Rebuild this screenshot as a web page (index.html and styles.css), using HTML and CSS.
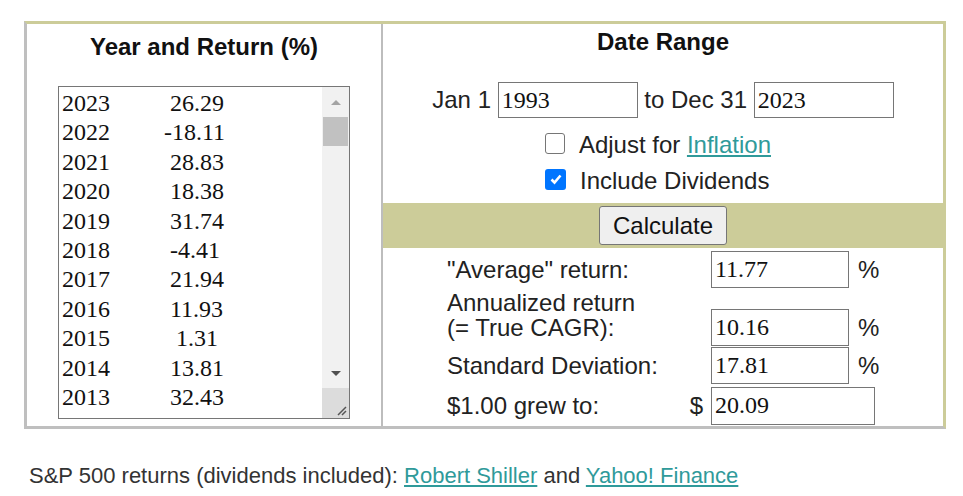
FILE: index.html
```html
<!DOCTYPE html>
<html>
<head>
    <meta charset="UTF-8">
    <link rel="stylesheet" href="styles.css">
</head>
<body>
    <div class="calc">
        <div class="col-left">
            <h2 class="heading heading-left">Year and Return (%)</h2>
            <div class="listbox">
                <div class="list-lines">
                    <div class="line">2023          26.29</div>
                    <div class="line">2022         -18.11</div>
                    <div class="line">2021          28.83</div>
                    <div class="line">2020          18.38</div>
                    <div class="line">2019          31.74</div>
                    <div class="line">2018          -4.41</div>
                    <div class="line">2017          21.94</div>
                    <div class="line">2016          11.93</div>
                    <div class="line">2015           1.31</div>
                    <div class="line">2014          13.81</div>
                    <div class="line">2013          32.43</div>
                </div>
                <div class="scrollbar">
                    <div class="sb-btn"><span class="arrow-up"></span></div>
                    <div class="sb-track"><div class="sb-thumb"></div></div>
                    <div class="sb-btn"><span class="arrow-down"></span></div>
                    <div class="sb-corner">
                        <svg width="12" height="12" viewBox="0 0 12 12"><path d="M11 3 L3 11 M11 7 L7 11" stroke="#555" stroke-width="1.5"/></svg>
                    </div>
                </div>
            </div>
        </div>
        <div class="col-right">
            <div class="range">
                <h2 class="heading">Date Range</h2>
                <div class="years">Jan 1 <input type="text" class="field" value="1993"> to Dec 31 <input type="text" class="field" value="2023"></div>
                <div class="checks">
                    <div class="check"><span class="box"></span>Adjust for <a href="#">Inflation</a></div>
                    <div class="check"><span class="box checked"><svg width="14" height="14" viewBox="0 0 14 14"><path d="M2.5 7.5 L5.5 10.5 L11.5 3.5" fill="none" stroke="#fff" stroke-width="2.6"/></svg></span>Include Dividends</div>
                </div>
            </div>
            <div class="band"><button class="calc-btn">Calculate</button></div>
            <div class="results">
                <div class="label">"Average" return:</div>
                <div class="dollar"></div>
                <input type="text" class="field out" value="11.77">
                <div class="pct">%</div>

                <div class="label label-two">Annualized return<br>(= True CAGR):</div>
                <div class="dollar"></div>
                <input type="text" class="field out out-end" value="10.16">
                <div class="pct pct-end">%</div>

                <div class="label">Standard Deviation:</div>
                <div class="dollar"></div>
                <input type="text" class="field out" value="17.81">
                <div class="pct">%</div>

                <div class="label">$1.00 grew to:</div>
                <div class="dollar">$</div>
                <input type="text" class="field out out-wide" value="20.09">
            </div>
        </div>
    </div>
    <p class="sources">S&amp;P 500 returns (dividends included): <a href="#">Robert Shiller</a> and <a href="#">Yahoo! Finance</a></p>
</body>
</html>
```

FILE: styles.css
```css
body {
    margin: 0;
    padding: 21px 0 0 24px;
    background-color: #fff;
    color: #222;
    font-family: "Liberation Sans", Arial, sans-serif;
    font-size: 24px;
}
a {
    color: #2f9a9a;
}
.calc {
    display: flex;
    width: 916px;
    height: 402px;
    border-style: solid;
    border-width: 3px;
    border-color: #cccc99 #cccc99 #bfbfbf #bfbfbf;
}
.col-left {
    width: 354px;
    border-right: 2px solid #bdbdbd;
    display: flex;
    flex-direction: column;
    align-items: center;
}
.col-right {
    flex: 1;
    display: flex;
    flex-direction: column;
}
.heading {
    margin: 4px 0 0;
    font-size: 24px;
    line-height: 28px;
    font-weight: bold;
    color: #111;
    text-align: center;
}
.heading-left {
    margin-top: 9px;
}

/* year list, drawn like a textarea */
.listbox {
    margin-top: 25px;
    width: 290px;
    height: 331px;
    border: 1px solid #767676;
    display: flex;
}
.list-lines {
    flex: 1;
    overflow: hidden;
    padding: 2px 0 0 3px;
    font-family: "Liberation Serif", "Times New Roman", serif;
    font-size: 24px;
    line-height: 29.4px;
    color: #111;
}
.line {
    white-space: pre;
}
.scrollbar {
    width: 27px;
    display: flex;
    flex-direction: column;
    background-color: #f1f1f1;
}
.sb-btn {
    height: 30px;
    display: flex;
    align-items: center;
    justify-content: center;
}
.arrow-up {
    border-left: 5px solid transparent;
    border-right: 5px solid transparent;
    border-bottom: 5px solid #a3a3a3;
}
.arrow-down {
    border-left: 5px solid transparent;
    border-right: 5px solid transparent;
    border-top: 5px solid #505050;
}
.sb-track {
    flex: 1;
    padding: 0 1px;
}
.sb-thumb {
    height: 29px;
    background-color: #c1c1c1;
}
.sb-corner {
    height: 30px;
    background-color: #dcdcdc;
    display: flex;
    align-items: flex-end;
    justify-content: flex-end;
    padding: 0 2px 2px 0;
    box-sizing: border-box;
}

/* date range */
.range {
    height: 179px;
}
.years {
    margin-top: 26px;
    text-align: center;
    line-height: 36px;
    height: 36px;
}
.field {
    box-sizing: border-box;
    width: 140px;
    height: 36px;
    border: 1px solid #767676;
    padding: 0 3px;
    font-family: "Liberation Serif", "Times New Roman", serif;
    font-size: 24px;
    color: #111;
    vertical-align: top;
    margin: 0;
}
.checks {
    margin: 9px auto 0;
    width: 226px;
    position: relative;
    left: -5px;
}
.check {
    display: flex;
    align-items: center;
    height: 36px;
    white-space: pre;
}
.box {
    box-sizing: border-box;
    width: 21px;
    height: 21px;
    margin: -4px 14px 0 0;
    border: 1.5px solid #767676;
    border-radius: 3px;
    background-color: #fff;
    display: flex;
    align-items: center;
    justify-content: center;
}
.box.checked {
    border: none;
    background-color: #0075ff;
}
.band {
    height: 45px;
    background-color: #cccc99;
    display: flex;
    align-items: center;
    justify-content: center;
}
.calc-btn {
    height: 39px;
    padding: 0 13px;
    font-family: "Liberation Sans", Arial, sans-serif;
    font-size: 24px;
    color: #111;
    background-color: #efefef;
    border: 1px solid #767676;
    border-radius: 3px;
}

/* results */
.results {
    height: 178px;
    padding-left: 64px;
    display: grid;
    grid-template-columns: 236px 28px 138px auto;
    grid-template-rows: 42px 56px 39px 41px;
    align-items: center;
}
.label {
    line-height: 25px;
}
.label-two {
    align-self: start;
}
.dollar {
    text-align: right;
    padding-right: 8px;
}
.out {
    width: 138px;
    height: 37px;
}
.out-end {
    align-self: end;
}
.out-wide {
    width: 164px;
    height: 38px;
    grid-column: span 2;
}
.pct {
    padding-left: 9px;
    line-height: 37px;
}
.pct-end {
    align-self: end;
}
.sources {
    margin: 34px 0 0 5px;
    font-size: 22px;
    line-height: 25px;
    color: #333;
}
```
